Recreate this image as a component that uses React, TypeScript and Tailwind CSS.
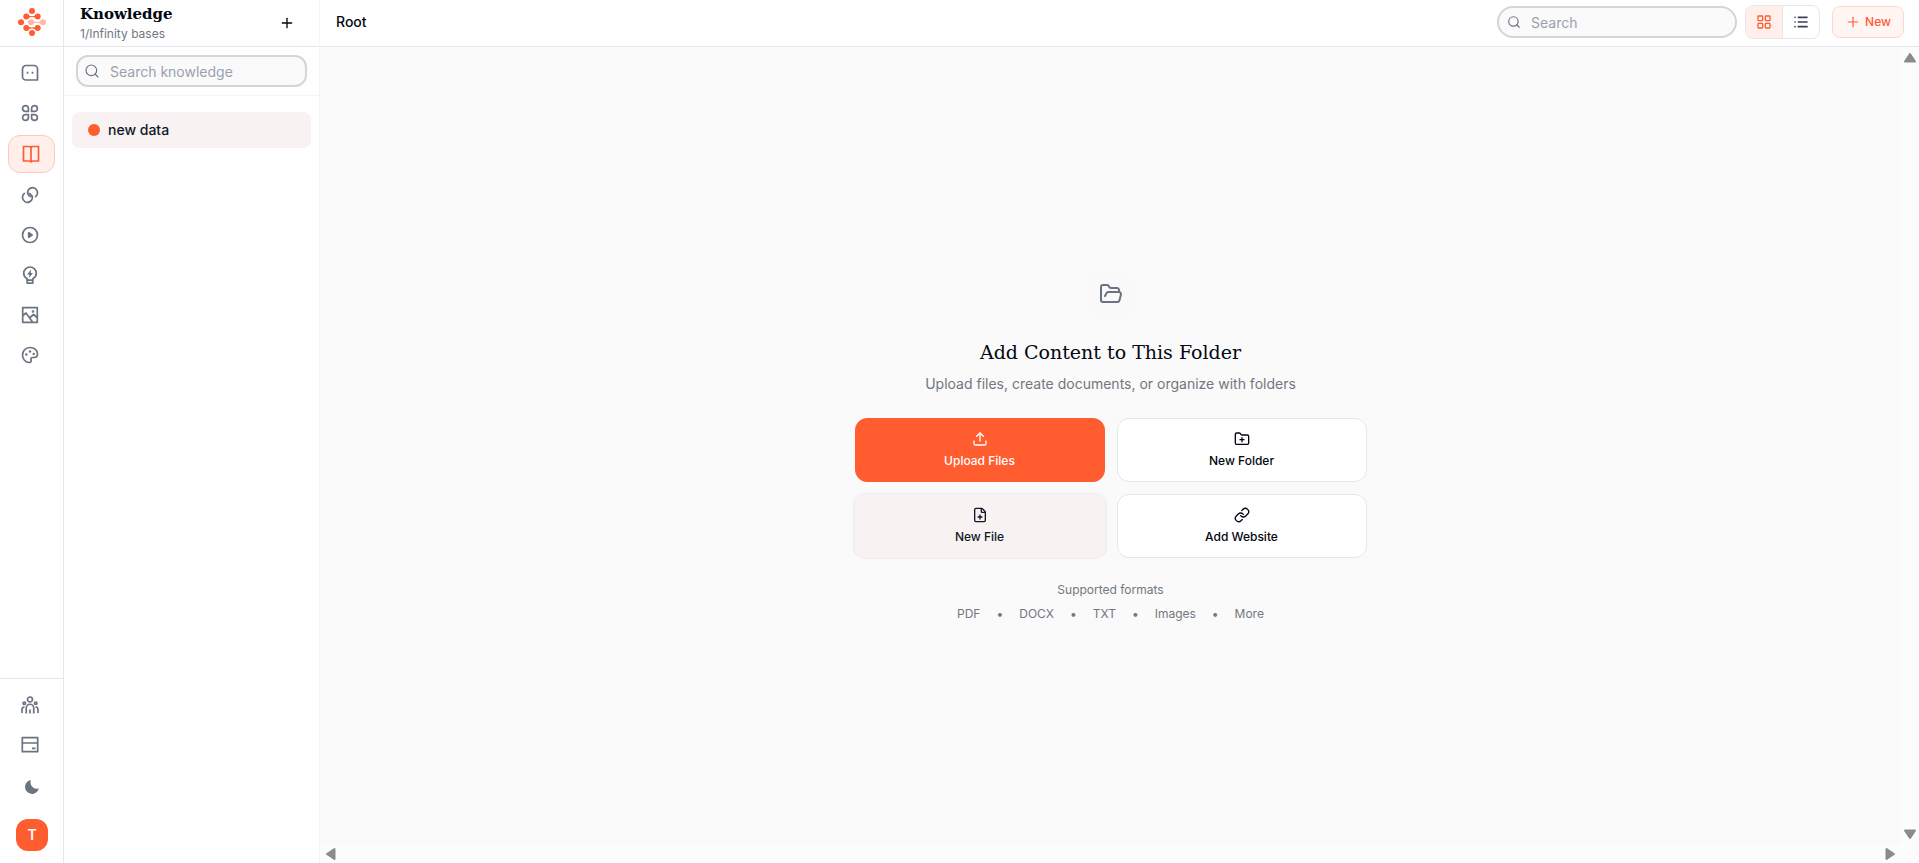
import type { ReactNode } from 'react';
import {
  FilePlus,
  FolderOpen,
  FolderPlus,
  LayoutGrid,
  Link,
  List,
  Plus,
  Search,
  Upload,
} from 'lucide-react';
import clsx from 'clsx';

function Glyph({ children }: { children: ReactNode }) {
  return (
    <svg
      viewBox="0 0 18 18"
      className="h-[18px] w-[18px]"
      fill="none"
      stroke="currentColor"
      strokeWidth="1.7"
      strokeLinejoin="round"
      aria-hidden="true"
    >
      {children}
    </svg>
  );
}

function Logo() {
  return (
    <svg viewBox="0 0 28 28" className="h-7 w-7" fill="#ff5c30" aria-hidden="true">
      <circle cx="14" cy="3" r="3" />
      <circle cx="8.3" cy="8.5" r="3" />
      <circle cx="19.7" cy="8.5" r="3" />
      <path d="M8.3 6.5Q14 10 19.7 6.5V10.5Q14 7.5 8.3 10.5Z" />
      <circle cx="3" cy="14.3" r="3" />
      <g fill="#ffb8a4">
        <circle cx="13" cy="14.3" r="3" />
        <circle cx="25" cy="14.3" r="3" />
        <path d="M13 12Q19 16 25 12V16.5Q19 13 13 16.5Z" />
      </g>
      <circle cx="8.3" cy="20" r="3" />
      <circle cx="19.7" cy="20" r="3" />
      <path d="M8.3 18Q14 21 19.7 18V22Q14 19 8.3 22Z" />
      <circle cx="14" cy="25" r="3" />
    </svg>
  );
}

const railItems = [
  {
    label: 'Chat',
    icon: (
      <Glyph>
        <path d="M5 1.5h8a3.5 3.5 0 0 1 3.5 3.5v11H5a3.5 3.5 0 0 1-3.5-3.5V5A3.5 3.5 0 0 1 5 1.5z" />
        <path d="M6.5 7.7v2M11.5 7.7v2" />
      </Glyph>
    ),
  },
  {
    label: 'Apps',
    icon: (
      <Glyph>
        <path d="M7.4 7.4H4.5a2.9 2.9 0 1 1 2.9-2.9zM10.6 7.4h2.9a2.9 2.9 0 1 0-2.9-2.9zM7.4 10.600H4.5a2.9 2.9 0 1 0 2.9 2.9zM10.6 10.6h2.9a2.9 2.9 0 1 1-2.9 2.9z" />
      </Glyph>
    ),
  },
  {
    label: 'Knowledge',
    active: true,
    icon: (
      <Glyph>
        <path d="M1.5 1.500H7q2 0 2 1.500q0-1.500 2-1.500h5.500v14.500H11q-2 0-2 1q0-1-2-1H1.500zM9 3v14.500" />
      </Glyph>
    ),
  },
  {
    label: 'Links',
    icon: (
      <Glyph>
        <g strokeLinecap="round">
          <path d="M14.6 10.6A5 5 0 1 0 6.600 5.800C6.300 8 7.500 9.300 9.600 10.600" />
          <path d="M3.400 7.400A5 5 0 1 0 11.400 12.200C11.700 10 10.500 8.700 8.400 7.400" />
        </g>
      </Glyph>
    ),
  },
  {
    label: 'Runs',
    icon: (
      <Glyph>
        <circle cx="9" cy="9" r="7.5" />
        <path d="M7.7 6.8v4.400l3.400-2.200z" fill="currentColor" />
      </Glyph>
    ),
  },
  {
    label: 'Prompts',
    icon: (
      <Glyph>
        <path d="M6 14v-1.500C4 11.500 2.700 9.800 2.700 7.300a6.300 6.300 0 0 1 12.600 0c0 2.500-1.300 4.200-3.300 5.200V14zM6.200 14.200h5.600v2.900H6.200z" />
        <path d="M10 3.500 6 8.500h2.300L8 12l4-5H9.700z" fill="currentColor" stroke="none" />
      </Glyph>
    ),
  },
  {
    label: 'Images',
    icon: (
      <Glyph>
        <path d="M1.700 1.700h14.600v14.600H1.700zM2 9.500l3-2.500 6.500 9M8.500 12l4-3.500 4 3.500" />
        <circle cx="12" cy="5.500" r=".5" fill="currentColor" />
      </Glyph>
    ),
  },
  {
    label: 'Design',
    icon: (
      <Glyph>
        <path d="M9 1.500c4.500 0 7.500 3 7.500 6.300 0 2.400-1.500 3.700-3.500 3.700h-1.500c-1.300 0-1.800 1-1.500 2 .4 1.300.2 3-1.500 3C4.500 16.500 1.500 13 1.500 9S4.500 1.500 9 1.500z" />
        <g fill="currentColor" stroke="none">
          <circle cx="5.300" cy="8.500" r="1.200" />
          <circle cx="9" cy="5.500" r="1.200" />
          <circle cx="12.700" cy="8" r="1.200" />
        </g>
      </Glyph>
    ),
  },
];

function Rail() {
  return (
    <aside className="flex w-16 shrink-0 flex-col border-r border-gray-200 bg-white text-[#6b7280]">
      <div className="flex h-[47px] shrink-0 items-start justify-center border-b border-gray-200 pt-2">
        <Logo />
      </div>
      <nav className="flex flex-1 flex-col gap-1 px-2 pt-2" aria-label="Main">
        {railItems.map((item) => (
          <button
            key={item.label}
            type="button"
            aria-label={item.label}
            className={clsx(
              'flex shrink-0 items-center rounded-xl',
              item.active
                ? 'h-[38px] border border-[#ffc9ba] bg-[#ffeeea] pl-[13px] text-[#ff5c30]'
                : 'h-9 pl-[13px]',
            )}
          >
            {item.icon}
          </button>
        ))}
      </nav>
      <div className="flex flex-col gap-1 border-t border-gray-200 px-2 pt-2 pb-3">
        <button type="button" aria-label="Team" className="flex h-9 items-center pl-[13px]">
          <Glyph>
            <circle cx="9" cy="3.500" r="2.500" />
            <path d="M5.250 17.500V12a3.750 3.750 0 0 1 7.500 0v5.500M9 13.500v4M1 17v-3.500q0-2.500 2.500-2.500M17 17v-3.500q0-2.500-2.500-2.500" />
            <circle cx="3.300" cy="7.300" r="1.200" />
            <circle cx="14.700" cy="7.300" r="1.200" />
          </Glyph>
        </button>
        <button type="button" aria-label="Billing" className="flex h-9 items-center pl-[13px]">
          <Glyph>
            <path d="M1.300 1.700h15.400v14H1.300zM1.300 7h15.400M11 12.300h3.500" />
          </Glyph>
        </button>
        <button type="button" aria-label="Dark mode" className="mt-0.5 flex h-9 items-center pl-4">
          <svg viewBox="0 0 16 16" className="h-4 w-4" fill="currentColor" aria-hidden="true">
            <path d="M6.500 1.200a.5.500 0 0 1 .3.700 6 6 0 0 0 7.300 7.500.5.500 0 0 1 .6.700A7 7 0 1 1 6 1.200z" />
          </svg>
        </button>
        <button
          type="button"
          className="mt-2.5 ml-2 h-8 w-8 rounded-xl bg-[#ff5c30] text-sm font-semibold text-white"
        >
          T
        </button>
      </div>
    </aside>
  );
}

function Sidebar() {
  return (
    <aside className="flex w-64 shrink-0 flex-col border-r border-gray-100 bg-[#fefefe]">
      <div className="flex h-[47px] shrink-0 items-start justify-between border-b border-gray-200 pr-6 pl-4">
        <div className="pt-0.5">
          <h1 className="font-['DejaVu_Serif',serif] text-[15px] leading-6 font-bold text-gray-950">
            Knowledge
          </h1>
          <p className="text-xs leading-4 text-[#737780]">1/Infinity bases</p>
        </div>
        <button type="button" aria-label="New base" className="self-center text-gray-950">
          <Plus className="h-4 w-4" />
        </button>
      </div>
      <div className="border-b border-gray-100 px-3 py-2">
        <label className="flex h-8 items-center rounded-xl border-2 border-gray-300 bg-[#fafafa] pl-1.5">
          <Search className="h-4 w-4 shrink-0 text-gray-500" strokeWidth={1.75} />
          <input
            type="text"
            aria-label="Search knowledge"
            placeholder="Search knowledge"
            className="ml-2.5 min-w-0 flex-1 bg-transparent pt-0.5 text-sm outline-none placeholder:text-gray-400"
          />
        </label>
      </div>
      <div className="px-2 pt-4">
        <button
          type="button"
          className="flex h-9 w-full items-center gap-2 rounded-lg bg-[#f8f2f2] px-4 text-sm font-medium text-gray-900"
        >
          <span className="h-3 w-3 rounded-full bg-[#ff5c30]" />
          new data
        </button>
      </div>
    </aside>
  );
}

function Toolbar() {
  return (
    <header className="flex h-[47px] shrink-0 items-start border-b border-gray-200 bg-white pr-[15px] pl-4">
      <span className="mt-3 flex-1 text-sm font-medium text-gray-950">Root</span>
      <label className="mt-1.5 flex h-8 w-60 items-center rounded-full border-2 border-gray-300 bg-[#fafafa] pl-2">
        <Search className="h-3.5 w-3.5 shrink-0 text-gray-500" />
        <input
          type="text"
          aria-label="Search"
          placeholder="Search"
          className="ml-2.5 min-w-0 flex-1 bg-transparent pt-0.5 text-sm outline-none placeholder:text-gray-400"
        />
      </label>
      <div className="mt-[5px] ml-2 flex h-[34px] overflow-hidden rounded-lg border border-gray-200">
        <button
          type="button"
          aria-label="Grid view"
          className="flex w-9 items-center justify-center bg-[#ffeeea] text-[#ff5c30]"
        >
          <LayoutGrid className="h-4 w-4" />
        </button>
        <button
          type="button"
          aria-label="List view"
          className="flex w-[37px] items-center justify-center border-l border-gray-200 text-gray-700"
        >
          <List className="h-4 w-4" strokeWidth={2.5} />
        </button>
      </div>
      <button
        type="button"
        className="mt-1.5 ml-3 flex h-8 w-[72px] items-center justify-center gap-1 rounded-lg border border-[#ffd6ca] bg-[#fff6f3] text-xs font-medium text-[#ff5c30]"
      >
        <Plus className="h-4 w-4" strokeWidth={1.75} />
        New
      </button>
    </header>
  );
}

const actions = [
  { label: 'Upload Files', Icon: Upload, style: 'bg-[#ff5c30] border-[#ff5c30] text-white' },
  { label: 'New Folder', Icon: FolderPlus, style: 'bg-white border-gray-200 text-gray-950' },
  {
    label: 'New File',
    Icon: FilePlus,
    style: '-mx-0.5 -my-px bg-[#f8f2f2] border-[#ececee] text-gray-900',
  },
  { label: 'Add Website', Icon: Link, style: 'bg-white border-gray-200 text-gray-950' },
];

const formats = ['PDF', 'DOCX', 'TXT', 'Images', 'More'];

function EmptyFolder() {
  return (
    <section className="flex flex-col items-center justify-center">
      <div className="mb-5 flex h-12 w-12 items-center justify-center rounded-full bg-[#f9f9f9] text-gray-500">
        <FolderOpen className="h-6 w-6" />
      </div>
      <h2 className="mb-2 font-['DejaVu_Serif',serif] text-[19px] leading-7 text-gray-950">
        Add Content to This Folder
      </h2>
      <p className="mb-6 text-sm leading-5 text-[#737780]">
        Upload files, create documents, or organize with folders
      </p>
      <div className="mb-6 grid w-full max-w-lg grid-cols-2 gap-3">
        {actions.map(({ label, Icon, style }) => (
          <button
            key={label}
            type="button"
            className={clsx(
              'flex min-h-16 flex-col items-center justify-center gap-1.5 rounded-xl border text-xs font-medium',
              style,
            )}
          >
            <Icon className="h-4 w-4" />
            {label}
          </button>
        ))}
      </div>
      <p className="mb-2 text-xs text-[#737780]">Supported formats</p>
      <ul className="flex gap-4 text-xs text-[#737780]">
        {formats.map((format, i) => (
          <li key={format} className="flex gap-4">
            {i > 0 && <span>•</span>}
            {format}
          </li>
        ))}
      </ul>
    </section>
  );
}

function Arrow({ d }: { d: string }) {
  return (
    <svg viewBox="0 0 14 14" className="h-3.5 w-3.5" aria-hidden="true">
      <path d={d} fill="#8b8b8b" stroke="#8b8b8b" strokeWidth="2" strokeLinejoin="round" />
    </svg>
  );
}

export default function App() {
  return (
    <div className="flex h-screen bg-white font-[Inter,sans-serif] text-gray-950">
      <Rail />
      <Sidebar />
      <main className="flex min-w-0 flex-1 flex-col">
        <Toolbar />
        <div className="grid min-h-0 flex-1 grid-cols-[1fr_18px] grid-rows-[1fr_18px] bg-[#fcfcfc]">
          <div className="grid bg-[#fafafa]">
            <EmptyFolder />
          </div>
          <div className="flex flex-col items-center justify-between py-1">
            <Arrow d="M7 3 12 10.500H2z" />
            <Arrow d="M7 11 2 3.500h10z" />
          </div>
          <div className="flex items-center justify-between px-1">
            <Arrow d="M3 7l7.500-5v10z" />
            <Arrow d="M11 7 3.500 2v10z" />
          </div>
        </div>
      </main>
    </div>
  );
}
